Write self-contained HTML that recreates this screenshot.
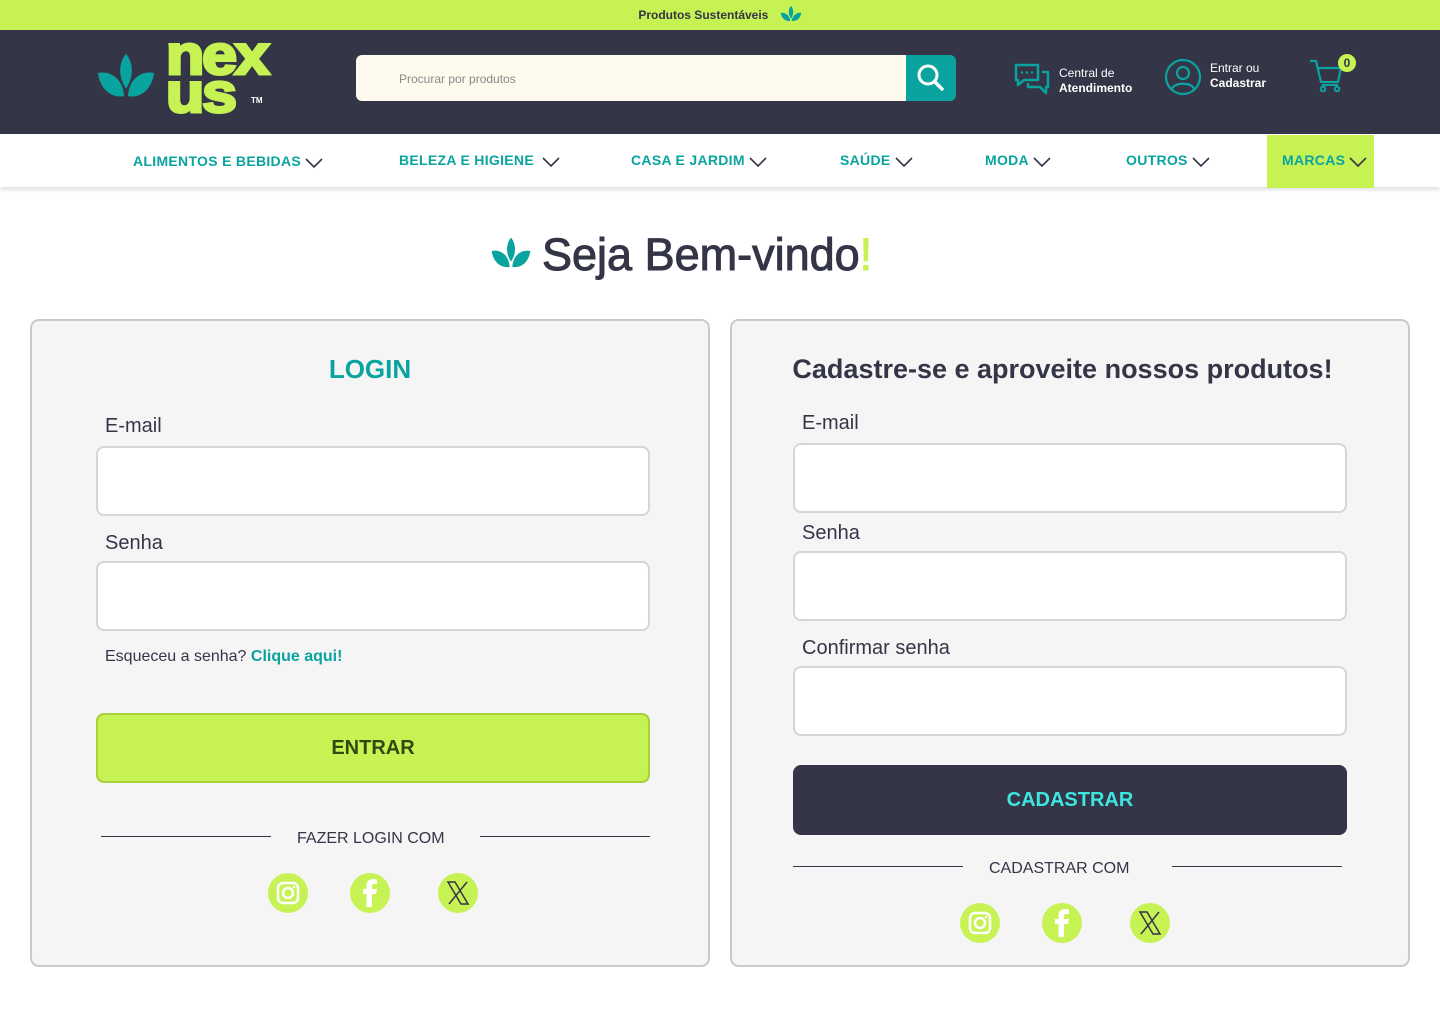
<!DOCTYPE html>
<html><head><meta charset="utf-8"><style>
*{box-sizing:border-box;margin:0;padding:0}
body{width:1440px;height:1024px;background:#fff;font-family:"Liberation Sans",sans-serif;position:relative;overflow:hidden;color:#343547}
.abs{position:absolute}
.top{left:0;top:0;width:1440px;height:30px;background:#c6f253;font-size:12px;font-weight:bold;color:#343547;text-align:center;line-height:31px}
.hdr{left:0;top:30px;width:1440px;height:104px;background:#343547}
.nav{left:0;top:134px;width:1440px;height:53px;background:#fff;box-shadow:0 3px 4px rgba(0,0,0,.12)}
.nav span{position:absolute;top:19px;font-size:14px;font-weight:bold;color:#0aa4a0;letter-spacing:.3px;white-space:nowrap}
.nav svg{vertical-align:-3px;margin-left:4px}
.card{border:2px solid #c9c9cc;border-radius:9px;background:#f5f5f5}
.lbl{font-size:20px;color:#343547}
.inp{background:#fff;border:2px solid #d6d6da;border-radius:8px;height:70px}
.circ{width:40px;height:40px;border-radius:50%;background:#c6f253}
.line{height:1px;background:#343547}
.sm{font-size:16px;color:#343547}
</style></head><body>
<div class="abs top">Produtos Sustentáveis <svg width="22" height="20" viewBox="0 0 60 50" style="vertical-align:-5px;margin-left:8px"><path d="M30 2C22 12 22 26 30 38C38 26 38 12 30 2Z" fill="#0aa4a0"/><path d="M2 22C14 20 26 28 28 44C14 46 4 36 2 22Z" fill="#0aa4a0"/><path d="M58 22C46 20 34 28 32 44C46 46 56 36 58 22Z" fill="#0aa4a0"/></svg></div>
<div class="abs hdr">
 <svg class="abs" style="left:97px;top:20px" width="58" height="52" viewBox="0 0 60 50"><path d="M30 2C22 12 22 26 30 38C38 26 38 12 30 2Z" fill="#0aa4a0"/><path d="M1 22C14 19 27 28 28 46C13 48 3 37 1 22Z" fill="#0aa4a0"/><path d="M59 22C46 19 33 28 32 46C47 48 57 37 59 22Z" fill="#0aa4a0"/></svg>
 <div class="abs" style="left:166px;top:6px;font-size:56px;font-weight:bold;color:#c6f253;letter-spacing:-2px;line-height:38px;-webkit-text-stroke:3px #c6f253;transform:scaleX(1.12);transform-origin:left">nex<br>us</div>
 <div class="abs" style="left:251px;top:66px;font-size:8px;font-weight:bold;color:#fff">TM</div>
 <div class="abs" style="left:356px;top:25px;width:552px;height:46px;background:#fffaee;border-radius:6px 0 0 6px;font-size:12px;color:#888;padding:17px 0 0 43px">Procurar por produtos</div>
 <div class="abs" style="left:906px;top:25px;width:50px;height:46px;background:#0aa4a0;border-radius:0 6px 6px 0"><svg width="50" height="46"><circle cx="22" cy="20" r="9" stroke="#fff" stroke-width="3" fill="none"/><path d="M29 27L36 34" stroke="#fff" stroke-width="3.5" stroke-linecap="round"/></svg></div>
 <svg class="abs" style="left:1013px;top:33px" width="38" height="36" viewBox="0 0 38 36"><path d="M3 2H25V17H11L5 22V17H3Z" fill="none" stroke="#0aa4a0" stroke-width="2.5" stroke-linejoin="round"/><path d="M29 9H35V24H33V30L27 24H15V20" fill="none" stroke="#0aa4a0" stroke-width="2.5" stroke-linejoin="round"/><circle cx="9" cy="9.5" r="1.2" fill="#0aa4a0"/><circle cx="14" cy="9.5" r="1.2" fill="#0aa4a0"/><circle cx="19" cy="9.5" r="1.2" fill="#0aa4a0"/></svg>
 <div class="abs" style="left:1059px;top:36px;font-size:12px;color:#fff;line-height:15px">Central de<br><b>Atendimento</b></div>
 <svg class="abs" style="left:1164px;top:28px" width="38" height="38"><circle cx="19" cy="19" r="17" stroke="#0aa4a0" stroke-width="2.2" fill="none"/><circle cx="19" cy="15" r="6" stroke="#0aa4a0" stroke-width="2.2" fill="none"/><path d="M8 31C10 24 28 24 30 31" stroke="#0aa4a0" stroke-width="2.2" fill="none"/></svg>
 <div class="abs" style="left:1210px;top:31px;font-size:12px;color:#fff;line-height:15px">Entrar ou<br><b>Cadastrar</b></div>
 <svg class="abs" style="left:1308px;top:28px" width="36" height="36" viewBox="0 0 36 36"><path d="M2 3H8L13 24H30L33 10H10" fill="none" stroke="#0aa4a0" stroke-width="2.2" stroke-linejoin="round"/><path d="M14 27H30" stroke="#0aa4a0" stroke-width="2"/><circle cx="15" cy="31" r="2.3" fill="none" stroke="#0aa4a0" stroke-width="2"/><circle cx="29" cy="31" r="2.3" fill="none" stroke="#0aa4a0" stroke-width="2"/></svg>
 <div class="abs" style="left:1338px;top:24px;width:18px;height:18px;border-radius:50%;background:#c6f253;font-size:12px;font-weight:bold;text-align:center;line-height:18px;color:#343547">0</div>
</div>
<div class="abs nav">
 <div class="abs" style="left:1267px;top:1px;width:107px;height:53px;background:#c6f253"></div>
 <span style="left:133px">ALIMENTOS E BEBIDAS<svg width="18" height="12"><path d="M1 2L9 10L17 2" stroke="#343547" stroke-width="1.6" fill="none"/></svg></span>
 <span style="left:399px;top:18px">BELEZA E HIGIENE <svg width="18" height="12"><path d="M1 2L9 10L17 2" stroke="#343547" stroke-width="1.6" fill="none"/></svg></span>
 <span style="left:631px;top:18px">CASA E JARDIM<svg width="18" height="12"><path d="M1 2L9 10L17 2" stroke="#343547" stroke-width="1.6" fill="none"/></svg></span>
 <span style="left:840px;top:18px">SAÚDE<svg width="18" height="12"><path d="M1 2L9 10L17 2" stroke="#343547" stroke-width="1.6" fill="none"/></svg></span>
 <span style="left:985px;top:18px">MODA<svg width="18" height="12"><path d="M1 2L9 10L17 2" stroke="#343547" stroke-width="1.6" fill="none"/></svg></span>
 <span style="left:1126px;top:18px">OUTROS<svg width="18" height="12"><path d="M1 2L9 10L17 2" stroke="#343547" stroke-width="1.6" fill="none"/></svg></span>
 <span style="left:1282px;top:18px">MARCAS<svg width="18" height="12"><path d="M1 2L9 10L17 2" stroke="#343547" stroke-width="1.6" fill="none"/></svg></span>
</div>
<svg class="abs" style="left:491px;top:236px" width="40" height="34" viewBox="0 0 60 50"><path d="M30 2C22 12 22 26 30 38C38 26 38 12 30 2Z" fill="#0aa4a0"/><path d="M1 22C14 19 27 28 28 46C13 48 3 37 1 22Z" fill="#0aa4a0"/><path d="M59 22C46 19 33 28 32 46C47 48 57 37 59 22Z" fill="#0aa4a0"/></svg>
<div class="abs" style="left:542px;top:229px;font-size:45px;color:#343547;white-space:nowrap;-webkit-text-stroke:1px #343547">Seja Bem-vindo<span style="color:#c6f253;-webkit-text-stroke:1px #c6f253">!</span></div>

<div class="abs card" style="left:30px;top:319px;width:680px;height:648px"></div>
<div class="abs" style="left:30px;top:354px;width:680px;text-align:center;font-size:26px;font-weight:bold;color:#0aa4a0">LOGIN</div>
<div class="abs lbl" style="left:105px;top:415px">E-mail</div>
<div class="abs inp" style="left:96px;top:446px;width:554px"></div>
<div class="abs lbl" style="left:105px;top:532px">Senha</div>
<div class="abs inp" style="left:96px;top:561px;width:554px"></div>
<div class="abs sm" style="left:105px;top:648px">Esqueceu a senha? <b style="color:#0aa4a0">Clique aqui!</b></div>
<div class="abs" style="left:96px;top:713px;width:554px;height:70px;background:#c6f253;border:2px solid #a8d03a;border-radius:8px;text-align:center;line-height:66px;font-size:20px;font-weight:bold;color:#2f4a10">ENTRAR</div>
<div class="abs line" style="left:101px;top:836px;width:170px"></div>
<div class="abs line" style="left:480px;top:836px;width:170px"></div>
<div class="abs sm" style="left:297px;top:830px">FAZER LOGIN COM</div>

<div class="abs card" style="left:730px;top:319px;width:680px;height:648px"></div>
<div class="abs" style="left:730px;top:354px;width:665px;text-align:center;font-size:27px;font-weight:bold;color:#343547">Cadastre-se e aproveite nossos produtos!</div>
<div class="abs lbl" style="left:802px;top:412px">E-mail</div>
<div class="abs inp" style="left:793px;top:443px;width:554px"></div>
<div class="abs lbl" style="left:802px;top:522px">Senha</div>
<div class="abs inp" style="left:793px;top:551px;width:554px"></div>
<div class="abs lbl" style="left:802px;top:637px">Confirmar senha</div>
<div class="abs inp" style="left:793px;top:666px;width:554px"></div>
<div class="abs" style="left:793px;top:765px;width:554px;height:70px;background:#343547;border-radius:8px;text-align:center;line-height:70px;font-size:20px;font-weight:bold;color:#3ee6e0">CADASTRAR</div>
<div class="abs line" style="left:793px;top:866px;width:170px"></div>
<div class="abs line" style="left:1172px;top:866px;width:170px"></div>
<div class="abs sm" style="left:989px;top:860px">CADASTRAR COM</div>

<div class="abs circ" style="left:268px;top:873px"><svg width="40" height="40"><rect x="10" y="10" width="20" height="20" rx="5" stroke="#fff" stroke-width="2.5" fill="none"/><circle cx="20" cy="20" r="5" stroke="#fff" stroke-width="2.5" fill="none"/><circle cx="26" cy="14" r="1.3" fill="#fff"/></svg></div>
<div class="abs circ" style="left:350px;top:873px"><svg width="40" height="40"><path d="M22 34V21H26L27 16H22V13C22 11.5 23 11 24.5 11H27V6.5C26 6.3 24.5 6 23 6C19 6 16.5 8.5 16.5 12.5V16H13V21H16.5V34Z" fill="#fff"/></svg></div>
<div class="abs circ" style="left:438px;top:873px"><svg width="40" height="40"><path d="M10 9H17L30 31H23Z" fill="none" stroke="#343547" stroke-width="1.5"/><path d="M29 9L11 31" stroke="#343547" stroke-width="1.5"/></svg></div>
<div class="abs circ" style="left:960px;top:903px"><svg width="40" height="40"><rect x="10" y="10" width="20" height="20" rx="5" stroke="#fff" stroke-width="2.5" fill="none"/><circle cx="20" cy="20" r="5" stroke="#fff" stroke-width="2.5" fill="none"/><circle cx="26" cy="14" r="1.3" fill="#fff"/></svg></div>
<div class="abs circ" style="left:1042px;top:903px"><svg width="40" height="40"><path d="M22 34V21H26L27 16H22V13C22 11.5 23 11 24.5 11H27V6.5C26 6.3 24.5 6 23 6C19 6 16.5 8.5 16.5 12.5V16H13V21H16.5V34Z" fill="#fff"/></svg></div>
<div class="abs circ" style="left:1130px;top:903px"><svg width="40" height="40"><path d="M10 9H17L30 31H23Z" fill="none" stroke="#343547" stroke-width="1.5"/><path d="M29 9L11 31" stroke="#343547" stroke-width="1.5"/></svg></div>
</body></html>
